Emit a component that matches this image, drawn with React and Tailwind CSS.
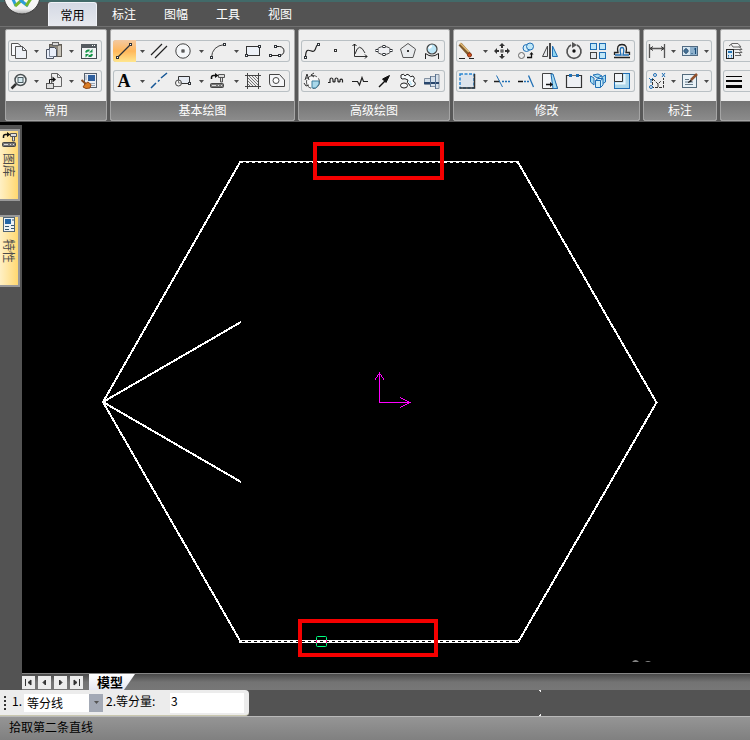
import React from "react";

const K = "#2f3338";
const B = "#1f6fb5";

function Glyph({ children }) {
  return (
    <svg width="22" height="22" viewBox="0 0 22 22" fill="none" stroke={K} strokeWidth="1" className="block shrink-0" aria-hidden="true">
      {children}
    </svg>
  );
}

const node = (x, y) => <rect x={x - 1} y={y - 1} width="2" height="2" fill="#fff" stroke={K} />;

const libraryArt = (
  <>
    <path d="M4.5 9V7.5Q4.5 5.5 6.5 5.5H8.5" stroke="#111" strokeWidth="1.5" />
    <path d="M8 3L11.5 5.5L8 8Z" fill="#111" stroke="none" />
    <path d="M11.5 4.5H17.5V7.5H11.5ZM13.5 7.5V12H15.5V7.5" fill="#ddd" stroke="#555" />
    <rect x="3.5" y="13.5" width="13" height="4" rx="1" fill="#777" stroke="#444" />
    <path d="M5 15.5H9M11 15.5H12M14 15.5H15" stroke="#ddd" />
  </>
);

const art = {
  copy: (
    <>
      <path d="M7 15.5H3.5V3.5H10L13 6" stroke="#555" fill="#f8f9fb" />
      <path d="M7.5 6.5H14.5L18.5 10.5V18.5H7.5Z" stroke="#555" fill="#eef1f6" />
      <path d="M14.5 6.5V10.5H18.5" stroke="#555" />
    </>
  ),
  paste: (
    <>
      <rect x="6.5" y="4.5" width="12" height="12" fill="#8b8579" stroke="#625e57" />
      <rect x="9.5" y="2.5" width="6" height="3" fill="#d8d8d8" stroke="#666" />
      <rect x="15" y="6" width="3" height="10" fill="#c7c3b9" stroke="none" />
      <path d="M3.5 9.5H6.5V7.5H11.5L13.5 9.5V16.5H10.5V18.5H3.5Z" stroke="#4a5260" fill="#e9effa" />
      <path d="M6.5 9.5V16.5H10.5" stroke="#7c8798" />
    </>
  ),
  refresh: (
    <>
      <rect x="3.5" y="4.5" width="15" height="14" fill="#f3f4f6" stroke="#444b50" />
      <rect x="3" y="4" width="16" height="4" fill="#555b60" stroke="none" />
      <path d="M14 5.5H15M16 5.5H17" stroke="#fff" />
      <path d="M8 12.5Q8.5 10 11.5 10.5M14 14Q13.5 16.500 10.5 16" stroke="#159447" strokeWidth="2" />
      <path d="M11 12.5L14.5 12.5V9ZM11 14H7.5V17.5Z" fill="#159447" stroke="none" />
    </>
  ),
  magnifier: (
    <>
      <path d="M8 14L3.5 18.5" stroke="#333" strokeWidth="2.5" />
      <circle cx="12.5" cy="10" r="5.5" fill="#eef4f6" stroke="#4a5052" strokeWidth="1.5" />
      <rect x="10" y="7.5" width="5" height="5" fill="#d5eaf0" stroke="#4a5a60" />
    </>
  ),
  insert: (
    <>
      <path d="M8.5 3.5H14.5L18.5 7.5V16.5H8.5Z" fill="#eee" stroke="#666" />
      <path d="M14.5 3.5V7.5H18.5" stroke="#666" />
      <rect x="3.5" y="13.5" width="7" height="5" fill="#ddd" stroke="#555" />
      <path d="M6.5 13V9.5H10" stroke="#111" />
      <path d="M9.5 6.5L13 9.5L9.5 12.5Z" fill="#111" stroke="none" />
    </>
  ),
  brushWindow: (
    <>
      <rect x="6.5" y="3.5" width="12" height="14" fill="#eceff4" stroke="#55606e" />
      <rect x="10" y="5" width="7" height="6" fill="#2e5f9e" stroke="none" />
      <path d="M8 5V10M12 13.5H17M13 15.5H17" stroke="#98a5b5" />
      <path d="M3.5 10L8 14" stroke="#8a4a1c" strokeWidth="2" />
      <path d="M7 14L10 12L13 14.5L12 18L8 18.5L5 17Z" fill="#dc7d24" stroke="#914716" />
    </>
  ),
  line: (<><path d="M5 17L17 5" strokeWidth="1.3" />{node(4.5, 17.5)}{node(17.5, 4.5)}</>),
  parallel: <path d="M3 15L14 4M7 18L19 6" stroke="#222" strokeWidth="1.2" />,
  circle: (<><circle cx="11" cy="11" r="7.2" fill="#f5f7f9" stroke="#444" /><rect x="10" y="10" width="2" height="2" fill="#fff" stroke="#222" /></>),
  arc: (<><path d="M4.5 17.5Q5 6 17.5 4.5" stroke="#444" />{node(4.5, 17.5)}{node(17.5, 4.5)}</>),
  rectangle: (<><rect x="4.5" y="6.5" width="13" height="9" fill="#edf1f7" stroke="#333" />{node(4.5, 15.5)}{node(17.5, 6.5)}</>),
  polyline: (<><path d="M4.5 15.5H13.5A4.5 4.5 0 0 0 13.5 6.5H10" stroke="#222" />{node(4.5, 15.5)}{node(13.5, 15.5)}{node(9.5, 6.5)}</>),
  letter: <text x="11" y="17" textAnchor="middle" fill="#050505" stroke="none" className="font-['Liberation_Serif',serif] text-[18px] font-bold">A</text>,
  centerline: <path d="M3 18L8 13M10 11.5L11.5 10M13 8L19 3" stroke="#155696" strokeWidth="1.5" />,
  label: (<><path d="M6.5 12V6.5H17.5V13.5H9" fill="#e6ebf3" stroke="#333" /><circle cx="6.5" cy="13" r="3" fill="#f5f5f5" stroke="#444" /><path d="M6.5 13L9.500 13M6.5 13V10" stroke="#777" />{node(17.5, 13.5)}</>),
  library: libraryArt,
  hatch: (
    <>
      <path d="M3 5.5H19M3 16.5H19M5.5 3V19M16.5 3V19" stroke="#444" />
      <path d="M7 6L16 15M10 6L16 12M13 6L16 9M6 8L14 16M6 11L11 16M6 14L8 16" stroke="#777" />
    </>
  ),
  contour: (<><path d="M3.5 4.5H13.5L18.5 10V16.5H7Q3.5 16.5 3.5 12Z" fill="#f4f5f7" stroke="#444" /><circle cx="10" cy="10.5" r="3" fill="#fff" stroke="#444" /></>),
  spline: (<><path d="M4.5 17C5 5 10 13 13 11C16 9 14 5 17.5 4.5" stroke="#222" strokeWidth="1.2" />{node(4.5, 17.5)}{node(17.5, 4.5)}</>),
  point: <rect x="9.5" y="9.5" width="2" height="2" fill="#fff" stroke="#333" />,
  axes: (<><path d="M5.5 4V16.5H18M6 14Q10 1 16 13" stroke="#333" /><path d="M3.500 6L5.5 4L7.500 6M16 14.5L18 16.5L16 18.5" stroke="#111" /></>),
  ellipse: (<><ellipse cx="11" cy="10.5" rx="7" ry="4" fill="#f0f1f4" stroke="#444" />{node(4, 10.5)}{node(18, 10.5)}{node(11, 6.5)}{node(11, 14.5)}</>),
  pentagon: (<><path d="M11 3.5L18.5 9L16 17.5H6L3.5 9Z" fill="#e9ebed" stroke="#555" /><rect x="10" y="10" width="2" height="2" fill="#333" stroke="none" /></>),
  zoomLocal: (<><circle cx="11" cy="9" r="5" fill="#bde7f8" stroke="#444" strokeWidth="1.2" /><path d="M8 8.500Q9 6.500 11 6" stroke="#fff" strokeWidth="2" /><path d="M4.5 19V13.5L8 15.5Q11 16.5 14 15.5L17.5 13.5V19" stroke="#222" /></>),
  rotateView: (<><circle cx="12" cy="12" r="6.5" fill="#f8f8f8" stroke="#555" strokeDasharray="10 2" /><path d="M11 11H18V14L15 18H11Z" fill="#a9d8ea" stroke="#3f7f9d" /><path d="M4 10L6 4L8 10M5 8H7M3 13L5 16L8 15M13 3L10 5L13 7" stroke="#333" /></>),
  wave: <path d="M3 12.5H5V10A1.500 2 0 0 1 8 10V11.500A1.500 1.500 0 0 0 10 11.5V10A1.500 2 0 0 1 13 10V11.500A1.500 1.500 0 0 0 15 11.5V10A1.500 2 0 0 1 17.5 10V12.5" stroke="#222" strokeWidth="1.2" />,
  breakLine: <path d="M3 11.5H8.5L10.5 15L13 7.5L14.5 11.5H19" stroke="#222" strokeWidth="1.2" />,
  arrow: (<><path d="M6 17L12 11" stroke="#111" strokeWidth="1.5" /><path d="M9.500 9L16.500 5.500L13 12.500Z" fill="#111" stroke="#111" /></>),
  gear: (<><path d="M4 8V5Q7 3 8 6Q10 3 12 5Q13 8 16 6Q19 8 16 11Q20 13 17 16Q13 18 12 14Q9 13 11 10Q8 8 5 9Z" fill="#f7fbfd" stroke="#222" /><ellipse cx="7" cy="15.5" rx="3.5" ry="2.5" fill="#f4f6f7" stroke="#222" /><path d="M12 12H14M13 14H15" stroke="#95d4ef" /></>),
  shaft: (<><path d="M3.5 8.5H9.5V6.5H14.500V4.5H18V18.5H14.500V16.5H9.5V14.5H3.5Z" fill="#d5dfe9" stroke="#8390a0" /><path d="M3 12H18V14H3Z" fill="#28466c" stroke="none" /><path d="M9.5 6V17M14.5 4V19" stroke="#5a7392" /></>),
  eraser: (<><path d="M4 4L13 14" stroke="#805c2e" strokeWidth="4" /><path d="M4 3L13 12" stroke="#e3bd7a" strokeWidth="1.5" /><circle cx="13.500" cy="15" r="2" fill="#d45118" stroke="#833216" /><path d="M3 18.5H9M13 18.5H18" stroke="#222" /></>),
  move: (<><path d="M11 5V8M11 14V17M5 11H8M14 11H17" stroke="#333" strokeWidth="2" /><path d="M8 6L11 3L14 6ZM8 16L11 19L14 16ZM6 8L3 11L6 14ZM16 8L19 11L16 14Z" fill="#333" stroke="none" /><rect x="10" y="10" width="2" height="2" fill="#fff" stroke="#333" /></>),
  copyObject: (<><circle cx="11.5" cy="8" r="3.5" fill="#d6effa" stroke={B} /><circle cx="15" cy="6.5" r="3.5" fill="#c0e7f7" stroke={B} /><circle cx="6.5" cy="15.5" r="3" fill="#eee" stroke="#666" /><path d="M12 17.5H16.5V14" stroke="#111" strokeWidth="1.3" /><path d="M14.500 14.5H18.500L16.500 12Z" fill="#111" stroke="none" /></>),
  mirror: (<><path d="M8.5 6V16.5H3.5Z" fill="#e6e8eb" stroke="#444" /><path d="M13.5 6V16.5H18.5Z" fill="#90d5ee" stroke={B} /><path d="M11 3V19" stroke="#111" strokeWidth="1.5" /></>),
  rotate: (<><path d="M8 5A7 7 0 1 0 14 5" stroke="#555" strokeWidth="1.7" /><path d="M9 2L14 5L9 8Z" fill="#555" stroke="none" /><circle cx="11" cy="11" r="1.7" fill="#111" stroke="none" /></>),
  array: (<><rect x="3.5" y="3.5" width="6" height="6" fill="#c1e7f8" stroke={B} /><rect x="12.5" y="3.5" width="6" height="6" fill="#c1e7f8" stroke={B} /><rect x="3.5" y="12.5" width="6" height="6" fill="#e6e9ed" stroke="#444" /><rect x="12.5" y="12.5" width="6" height="6" fill="#c1e7f8" stroke={B} /></>),
  offset: (<><path d="M3.500 15V12.5H7Q5 4.5 11 4.5T15 12.5H18.500V15" stroke="#222" strokeWidth="1.3" /><path d="M4 15H10Q8 7.5 11 7.500T12 15H18" stroke={B} strokeWidth="1.3" /><path d="M3 17.5H19" stroke="#222" strokeWidth="1.3" /></>),
  stretch: (<><rect x="4" y="4" width="14" height="14" fill="#dde4ec" stroke="#2a86d2" strokeWidth="1.5" strokeDasharray="3 1.5" /><path d="M3.500 18H18.500V4" stroke="#333" strokeWidth="1.5" /></>),
  trim: (<><path d="M3 11.5H9" stroke="#222" strokeWidth="1.5" /><path d="M5.5 5.5L11.5 17" stroke={B} /><path d="M11 11.5H19" stroke={B} strokeWidth="1.5" strokeDasharray="2 1" /></>),
  extend: (<><path d="M3 11.5H8" stroke="#111" strokeWidth="1.7" /><path d="M9 11.5H15" stroke={B} strokeWidth="1.5" strokeDasharray="2 1" /><path d="M13.5 5.5L18.5 17" stroke={B} strokeWidth="1.3" /></>),
  stretchShape: (<><path d="M3.5 3.5H13L18.5 18.5H3.5Z" fill="#f5f6f8" stroke="#444" /><path d="M12 4H14L18.5 18.5H14Z" fill="#a8dcf0" stroke={B} /><path d="M7 14.5H12" stroke="#111" strokeWidth="1.3" /><path d="M11 12L14 14.5L11 17Z" fill="#111" stroke="none" /></>),
  breakShape: (<><path d="M7 5.5H3.5V17.5H18.5V5.5H15" fill="#eef0f4" stroke="#333" strokeWidth="1.2" /><path d="M9 5.5H13" stroke="#777" /><path d="M6 4H9V7H6ZM13 4H16V7H13Z" fill={B} stroke="none" /></>),
  explode: (<><path d="M3.5 6L7 8V15L3.5 12ZM6 5L11 4L15 6L10 8ZM15 7L18.5 5V12L15 14Z" fill="#a9ddf2" stroke={B} /><path d="M8.5 10.5L11 8.5H16V15L13.5 17.5H8.5ZM8.5 10.5H13.5V17.5M13.5 10.5L16 8.5" fill="#d0edf8" stroke={B} /></>),
  scale: (<><rect x="3.5" y="3.5" width="15" height="15" fill="#add7ea" stroke={B} /><path d="M3.5 3.5H11.5V11.5H3.5Z" fill="#f2f4f7" stroke="#333" /><path d="M13.500 4V13.500H4" stroke="#e9f7fd" strokeWidth="2" /></>),
  dimension: (<><path d="M3.5 4V18M18.5 4V18M4 8.5H18" stroke="#555" strokeWidth="1.3" /><path d="M7 6.5L4 8.5L7 10.5M15 6.5L18 8.5L15 10.5" stroke="#333" /></>),
  tolerance: (<><rect x="3.5" y="6.5" width="15" height="9" fill="#d7e6f0" stroke="#526b82" /><path d="M11 7H18V15H11Z" fill="#8db0cc" stroke="none" /><circle cx="7" cy="11" r="2" stroke="#30516d" /><path d="M7 8V14M4.5 11H9.5M12.500 13.500H13.500M16.5 8V14M15 9H17" stroke="#174b78" /></>),
  coordinate: (<><path d="M6.5 8V17.5H17.5V8M7 9L12 14L15 11M12 14V17" stroke="#333" strokeDasharray="3 1" /><path d="M3 8L5 10L7 8M5 10V13M16 3L19 7M19 3L16 7" stroke={B} /><circle cx="9" cy="5" r="1.5" stroke={B} /><circle cx="5" cy="17" r="1.5" fill="#eee" stroke={B} /></>),
  edit: (<><rect x="3.5" y="4.5" width="14" height="13" fill="#e9f2f7" stroke="#536b7c" /><path d="M6 9.5H10M6 12H14M6 14.5H14" stroke="#667b8b" /><path d="M12 10L18 4" stroke="#93522d" strokeWidth="2.5" /><path d="M9 12L12 9.500L13 11.500L9 13Z" fill="#222" stroke="none" /></>),
  layers: (<><path d="M6 6L9 3.5H15L18 7H10L8 4M9 9.5H19L16 6.500M12 12.500H19L16 9.500M12 15.500H18L16 12.500" fill="#f3f3f3" stroke="#666" /><rect x="3.5" y="9.5" width="7" height="9" fill="#dcebf5" stroke="#222" /><rect x="5" y="11" width="4" height="2" fill="#2477b9" stroke="none" /><path d="M5 15.5H6M8 15.5H9M5 17H6M8 17H9" stroke={B} /></>),
  lineWidth: (<><path d="M3 6.5H19" stroke="#050505" /><path d="M3 11H19" stroke="#050505" strokeWidth="2" /><path d="M3 16.500H19" stroke="#050505" strokeWidth="3" /></>),
};

const groups = [
  {
    title: "常用", width: "w-[102px]", bar: "w-[94px]", cell: "w-[22px]", arrow: "w-[13px]",
    rows: [
      [["copy", "复制", 1], ["paste", "粘贴", 1], ["refresh", "刷新"]],
      [["magnifier", "缩放", 1], ["insert", "插入", 1], ["brushWindow", "特性匹配"]],
    ],
  },
  {
    title: "基本绘图", width: "w-[185px]", bar: "w-[177px]", cell: "w-6", arrow: "w-[11px]",
    rows: [
      [["line", "直线", 1], ["parallel", "平行线"], ["circle", "圆", 1], ["arc", "圆弧", 1], ["rectangle", "矩形"], ["polyline", "多段线"]],
      [["letter", "文字", 1], ["centerline", "中心线"], ["label", "引出", 1], ["library", "图库", 1], ["hatch", "剖面线"], ["contour", "轮廓"]],
    ],
  },
  {
    title: "高级绘图", width: "w-[152px]", bar: "w-36", cell: "w-6", arrow: "w-[11px]",
    rows: [
      [["spline", "样条"], ["point", "点"], ["axes", "公式曲线"], ["ellipse", "椭圆"], ["pentagon", "正多边形"], ["zoomLocal", "局部放大"]],
      [["rotateView", "旋转视图"], ["wave", "波浪线"], ["breakLine", "双折线"], ["arrow", "箭头"], ["gear", "齿轮"], ["shaft", "孔轴"]],
    ],
  },
  {
    title: "修改", width: "w-[187px]", bar: "w-[179px]", cell: "w-6", arrow: "w-[11px]",
    rows: [
      [["eraser", "删除", 1], ["move", "平移"], ["copyObject", "平移复制"], ["mirror", "镜像"], ["rotate", "旋转"], ["array", "阵列"], ["offset", "等距线"]],
      [["stretch", "拉伸", 1], ["trim", "裁剪"], ["extend", "延伸"], ["stretchShape", "移动边"], ["breakShape", "打断"], ["explode", "分解"], ["scale", "缩放"]],
    ],
  },
  {
    title: "标注", width: "w-[74px]", bar: "w-[66px]", cell: "w-[22px]", arrow: "w-[11px]",
    rows: [
      [["dimension", "尺寸标注", 1], ["tolerance", "公差", 1]],
      [["coordinate", "坐标标注", 1], ["edit", "标注编辑", 1]],
    ],
  },
  {
    title: "", width: "w-[74px]", bar: "w-[66px]", cell: "w-[22px]", arrow: "w-[11px]",
    rows: [[["layers", "图层"]], [["lineWidth", "线宽"]]],
  },
];

function ToolRow({ row, group }) {
  return (
    <div className={`${group.bar} flex h-[22px] overflow-hidden rounded-[3px] bg-[#eeeeee] ring-1 ring-[#b9c0c4] ring-inset`}>
      {row.map(([id, name, hasMenu]) => (
        <React.Fragment key={id}>
          <button
            type="button"
            aria-label={name}
            className={`${group.cell} h-[22px] shrink-0 ${id === "line" ? "bg-linear-to-b from-[#f3c9a0] via-[#ffb75a] to-[#ffe68e] bg-[length:23px_22px] bg-no-repeat" : ""}`}
          >
            <Glyph>{art[id]}</Glyph>
          </button>
          {hasMenu && (
            <button type="button" aria-label={`${name}选项`} className={`${group.arrow} flex h-[22px] shrink-0 items-center justify-center`}>
              <svg width="5" height="3" viewBox="0 0 5 3" className="block" aria-hidden="true"><path d="M0 0H5L2.5 3Z" fill="#4a4a4a" /></svg>
            </button>
          )}
        </React.Fragment>
      ))}
    </div>
  );
}

function RibbonGroup({ group }) {
  return (
    <section className={`${group.width} shrink-0 overflow-hidden rounded-[2px] border border-[#a5a5a5] bg-[#efefef]`}>
      <div className="flex flex-col gap-2 px-[2px] pt-[10px] pb-[9px]">
        {group.rows.map((row, i) => <ToolRow key={i} row={row} group={group} />)}
      </div>
      <h2 className="h-[19px] bg-linear-to-b from-[#747474] to-[#8b8b8b] text-center text-xs leading-[18px] text-white">{group.title}</h2>
    </section>
  );
}

function Header() {
  return (
    <header className="bg-[linear-gradient(#426a69_2px,#535353_2px)]">
      <nav className="flex h-[26px] items-end">
        <svg width="48" height="26" viewBox="0 0 48 26" className="block shrink-0" aria-label="菜单" role="img">
          <defs>
            <linearGradient id="orb" x1="0" y1="0" x2="0" y2="1"><stop offset="0" stopColor="#fff" /><stop offset="0.85" stopColor="#f4f4f4" /><stop offset="1" stopColor="#a9a9a9" /></linearGradient>
          </defs>
          <circle cx="22" cy="-4" r="18" fill="url(#orb)" stroke="#3b3b3b" />
          <path d="M12 -3L16 6" fill="none" stroke="#2b9ed8" strokeWidth="3" />
          <path d="M15 6L23 -1" fill="none" stroke="#76b82a" strokeWidth="3" />
          <path d="M20 0L28 6" fill="none" stroke="#2b9ed8" strokeWidth="3" />
          <path d="M26 6L32 -3" fill="none" stroke="#76b82a" strokeWidth="3" />
        </svg>
        <button type="button" className="mr-px h-6 w-[49px] rounded-t-[3px] border border-b-0 border-[#f0f2f7] bg-linear-to-b from-[#d4d9e4] to-[#e7e9ee] text-xs text-black">常用</button>
        {["标注", "图幅", "工具", "视图"].map((t) => (
          <button key={t} type="button" className="h-6 w-[52px] text-xs text-white">{t}</button>
        ))}
      </nav>
      <div className="flex gap-[3px] overflow-hidden border-t border-[#707070] bg-[#585858] pt-[2px] pb-px pl-[5px]">
        {groups.map((g, i) => <RibbonGroup key={i} group={g} />)}
      </div>
      <div className="h-[3px] bg-black" />
    </header>
  );
}

function SideTab({ label, children }) {
  return (
    <button type="button" className="flex h-[72px] w-5 flex-col items-center justify-start gap-1 border-2 border-l-0 border-[#999] bg-linear-to-r from-[#fff0c4] to-[#ffd86e]">
      {children}
      <span className="text-xs leading-4 text-[#4c4c4c] [text-orientation:sideways] [writing-mode:vertical-rl]">{label}</span>
    </button>
  );
}

function Drawing() {
  return (
    <svg viewBox="22 125 728 548" className="block h-auto w-full bg-black" fill="none" role="img" aria-label="绘图区">
      <g stroke="#fff" strokeWidth="2" shapeRendering="crispEdges">
        <path d="M240.5 161.5L103 402L240.5 641.5M517.5 161.5L656.5 402.5L518.5 641.5" />
        <path d="M103 402L241 322M103 402L241 482" />
      </g>
      <g stroke="#fff" strokeWidth="1" shapeRendering="crispEdges">
        <path d="M240 161.5H518M239 640.5H519M239 642.5H519" />
        <path d="M240 162.5H518M239 641.5H519" strokeDasharray="3 3" />
      </g>
      <path d="M379.5 373V402.5H410M374.5 380.5L379.5 373L384.5 380.5M400 397.5L410 402.5L400 407.5" stroke="#ff00ff" shapeRendering="crispEdges" />
      <rect x="315" y="144" width="127" height="34" stroke="#f50000" strokeWidth="4" />
      <rect x="300" y="621" width="136" height="34" stroke="#f50000" strokeWidth="4" />
      <rect x="316.5" y="636.5" width="10" height="10" rx="1" stroke="#00ff80" />
      <path d="M316.5 640V643M326.5 640V643" stroke="#ff0080" />
      <path d="M632 662Q635.5 658 639 662ZM645 662Q648 660 651 662Z" fill="#858585" />
    </svg>
  );
}

const navArrows = [
  ["首页", "M3.5 3V10M9 4V9L6 6.5Z"],
  ["上一页", "M7.500 4V9L5 6.5Z"],
  ["下一页", "M5.500 4V9L8 6.5Z"],
  ["末页", "M9.5 3V10M4 4V9L7 6.5Z"],
];

export default function App() {
  return (
    <div className="w-full overflow-hidden bg-[#535353] font-['Noto_Sans_CJK_SC',sans-serif] text-xs text-black">
      <Header />
      <main className="flex">
        <aside className="flex w-[22px] shrink-0 flex-col gap-[14px] pt-1">
          <SideTab label="图库">
            <svg width="16" height="18" viewBox="2 2 16 18" className="block shrink-0" fill="none" aria-hidden="true">{libraryArt}</svg>
          </SideTab>
          <SideTab label="特性">
            <svg width="16" height="18" viewBox="0 0 16 18" className="block shrink-0" aria-hidden="true">
              <rect x="2.5" y="0.5" width="11" height="14" fill="#eef2f5" stroke="#526574" />
              <rect x="4" y="2" width="6" height="5" fill="#2465a5" />
              <path d="M11 3H13M4 9.5H8M10 8.5H13M4 12.5H8M10 11.5H13" stroke="#35566e" />
            </svg>
          </SideTab>
        </aside>
        <div className="min-w-0 flex-1">
          <Drawing />
          <div className="flex h-[17px] items-start gap-[3px] border-t border-[#858585] bg-linear-to-b from-[#4a4a4a] via-[#737373] to-[#777777]">
            {navArrows.map(([name, d]) => (
              <button key={name} type="button" aria-label={name} className="mt-[2px] h-[13px] w-[13px] shrink-0 bg-[#ececec]">
                <svg width="13" height="13" viewBox="0 0 13 13" className="block" aria-hidden="true"><path d={d} fill="#333" stroke="#333" strokeWidth="1" /></svg>
              </button>
            ))}
            <button type="button" className="ml-[3px] h-4 w-[46px] bg-linear-to-b from-white to-[#e5e7f2] pr-1 text-[13px] leading-4 font-bold [clip-path:polygon(0_0,100%_0,76%_100%,0_100%)]">模型</button>
          </div>
        </div>
      </main>
      <div className="flex items-start">
        <form className="flex h-[26px] w-[249px] items-center rounded-r-[4px] border-b border-[#c9c7ae] bg-[#ececec]">
          <svg width="12" height="18" viewBox="0 0 12 18" className="block shrink-0" aria-hidden="true"><path d="M4 2H6V4H4ZM4 6H6V8H4ZM4 10H6V12H4ZM4 14H6V16H4Z" fill="#333" /></svg>
          <label htmlFor="mode" className="w-3 pb-1 text-xs leading-5">1.</label>
          <div className="flex h-[18px] w-[79px] bg-white">
            <select id="mode" className="h-[18px] w-full appearance-none bg-linear-to-r from-white from-82% to-[#a3a9b5] to-82% bg-no-repeat pl-[3px] text-xs leading-[18px] outline-none">
              <option>等分线</option>
            </select>
            <svg width="5" height="3" viewBox="0 0 5 3" className="pointer-events-none mt-[7px] mr-1 -ml-[9px] block shrink-0" aria-hidden="true"><path d="M0 0H5L2.5 3Z" fill="#555" /></svg>
          </div>
          <label htmlFor="amount" className="w-[67px] pb-1 pl-[3px] text-xs leading-5">2.等分量:</label>
          <input id="amount" type="text" defaultValue="3" className="h-5 w-[74px] bg-white pb-1 pl-[1px] text-xs outline-none" />
        </form>
        <svg width="5" height="26" viewBox="0 0 5 26" className="ml-[290px] block" aria-hidden="true"><path d="M0 0H2V2H1V1H0ZM1 24H2V26H0V25H1Z" fill="#eee" /></svg>
      </div>
      <footer className="h-6 border-t border-[#b9b9b9] bg-linear-to-b from-[#959595] to-[#808080] pl-[9px] text-xs leading-5">拾取第二条直线</footer>
    </div>
  );
}
